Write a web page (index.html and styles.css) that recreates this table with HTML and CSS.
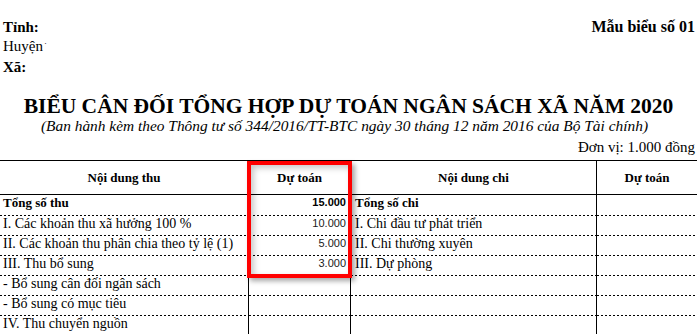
FILE: index.html
```html
<!DOCTYPE html>
<html lang="vi">
<head>
<meta charset="utf-8">
<title>Biểu cân đối tổng hợp dự toán ngân sách xã năm 2020</title>
<link rel="stylesheet" href="styles.css">
</head>
<body>
<div class="page">
  <div class="top">
    <div class="place">
      <div class="b">Tỉnh:</div>
      <div>Huyện<span class="dot">·</span></div>
      <div class="b">Xã:</div>
    </div>
    <div class="form-no">Mẫu biểu số 01</div>
  </div>
  <h1 class="title">BIỂU CÂN ĐỐI TỔNG HỢP DỰ TOÁN NGÂN SÁCH XÃ NĂM 2020</h1>
  <p class="sub">(Ban hành kèm theo Thông tư số 344/2016/TT-BTC ngày 30 tháng 12 năm 2016 của Bộ Tài chính)</p>
  <div class="unit">Đơn vị: 1.000 đồng</div>
  <div class="sheet">
    <table class="grid">
      <colgroup>
        <col class="c1"><col class="c2"><col class="c3"><col class="c4">
      </colgroup>
      <thead>
        <tr>
          <th>Nội dung thu</th>
          <th>Dự toán</th>
          <th>Nội dung chi</th>
          <th class="last">Dự toán</th>
        </tr>
      </thead>
      <tbody>
        <tr class="first">
          <td class="b">Tổng số thu</td>
          <td class="num nb">15.000</td>
          <td class="b txt">Tổng số chi</td>
          <td class="last"></td>
        </tr>
        <tr>
          <td>I. Các khoản thu xã hưởng 100 %</td>
          <td class="num">10.000</td>
          <td class="txt">I. Chi đầu tư phát triển</td>
          <td class="last"></td>
        </tr>
        <tr>
          <td>II. Các khoản thu phân chia theo tỷ lệ (1)</td>
          <td class="num">5.000</td>
          <td class="txt">II. Chi thường xuyên</td>
          <td class="last"></td>
        </tr>
        <tr>
          <td>III. Thu bổ sung</td>
          <td class="num">3.000</td>
          <td class="txt">III. Dự phòng</td>
          <td class="last"></td>
        </tr>
        <tr>
          <td>- Bổ sung cân đối ngân sách</td>
          <td class="num"></td>
          <td class="txt"></td>
          <td class="last"></td>
        </tr>
        <tr>
          <td>- Bổ sung có mục tiêu</td>
          <td class="num"></td>
          <td class="txt"></td>
          <td class="last"></td>
        </tr>
        <tr>
          <td>IV. Thu chuyển nguồn</td>
          <td class="num"></td>
          <td class="txt"></td>
          <td class="last"></td>
        </tr>
      </tbody>
    </table>
    <div class="highlight"></div>
  </div>
</div>
</body>
</html>
```
FILE: styles.css
```css
html, body {
  margin: 0;
  padding: 0;
  background: #fff;
  overflow: hidden;
}
body {
  font-family: "Liberation Serif", "Times New Roman", serif;
  color: #000;
  width: 697px;
  height: 334px;
}
.page {
  width: 697px;
}
.top {
  display: flex;
  justify-content: space-between;
  align-items: flex-start;
  padding: 18px 2px 0 3px;
}
.place {
  font-size: 15px;
  line-height: 19px;
}
.b {
  font-weight: bold;
}
.dot {
  font-size: 9px;
  position: relative;
  top: -5px;
  margin-left: 1px;
}
.form-no {
  font-size: 16px;
  font-weight: bold;
  line-height: 19px;
  margin-top: -1px;
}
.title {
  margin: 17px 0 0;
  font-size: 21.5px;
  line-height: 24px;
  font-weight: bold;
  text-align: center;
}
.sub {
  margin: 0;
  font-size: 15.4px;
  line-height: 16px;
  font-style: italic;
  text-align: center;
  padding-right: 8px;
}
.unit {
  margin-top: 5px;
  font-size: 15px;
  line-height: 16px;
  text-align: right;
  padding-right: 2px;
}
.sheet {
  position: relative;
  margin-top: 5px;
}
.grid {
  width: 697px;
  table-layout: fixed;
  border-collapse: separate;
  border-spacing: 0;
  border-top: 1px solid #000;
}
.c1 { width: 249px; }
.c2 { width: 102px; }
.c3 { width: 246px; }
.c4 { width: 100px; }
.grid th {
  height: 33px;
  padding: 0;
  font-size: 13px;
  font-weight: bold;
  text-align: center;
  vertical-align: middle;
  border-right: 1px solid #000;
  border-bottom: 1px solid #000;
}
.grid td {
  padding: 0 0 4px 3px;
  font-size: 14px;
  line-height: 15px;
  white-space: nowrap;
  overflow: hidden;
  border-right: 1px solid #000;
  border-bottom: 1px solid transparent;
  background-image: repeating-linear-gradient(90deg, #000 0 2px, transparent 2px 4px);
  background-size: 100% 1px;
  background-position: left bottom;
  background-repeat: no-repeat;
  background-origin: border-box;
  background-clip: border-box;
  vertical-align: top;
}
.grid td.b {
  font-size: 13px;
}
.grid tr.first td {
  padding-bottom: 5px;
}
.grid td.txt {
  padding-left: 4px;
}
.grid td.num {
  font-family: "Liberation Sans", Arial, sans-serif;
  font-size: 11px;
  text-align: right;
  padding-right: 4px;
  color: #1a1a1a;
}
.grid td.nb {
  font-weight: bold;
  color: #000;
}
.grid .last {
  border-right: none;
}
.highlight {
  position: absolute;
  left: 247px;
  top: 1px;
  width: 97px;
  height: 109px;
  border: 4px solid #f00;
  box-shadow: 3px 3px 5px rgba(0, 0, 0, 0.35), inset 3px 3px 6px rgba(0, 0, 0, 0.22);
  pointer-events: none;
}
```
